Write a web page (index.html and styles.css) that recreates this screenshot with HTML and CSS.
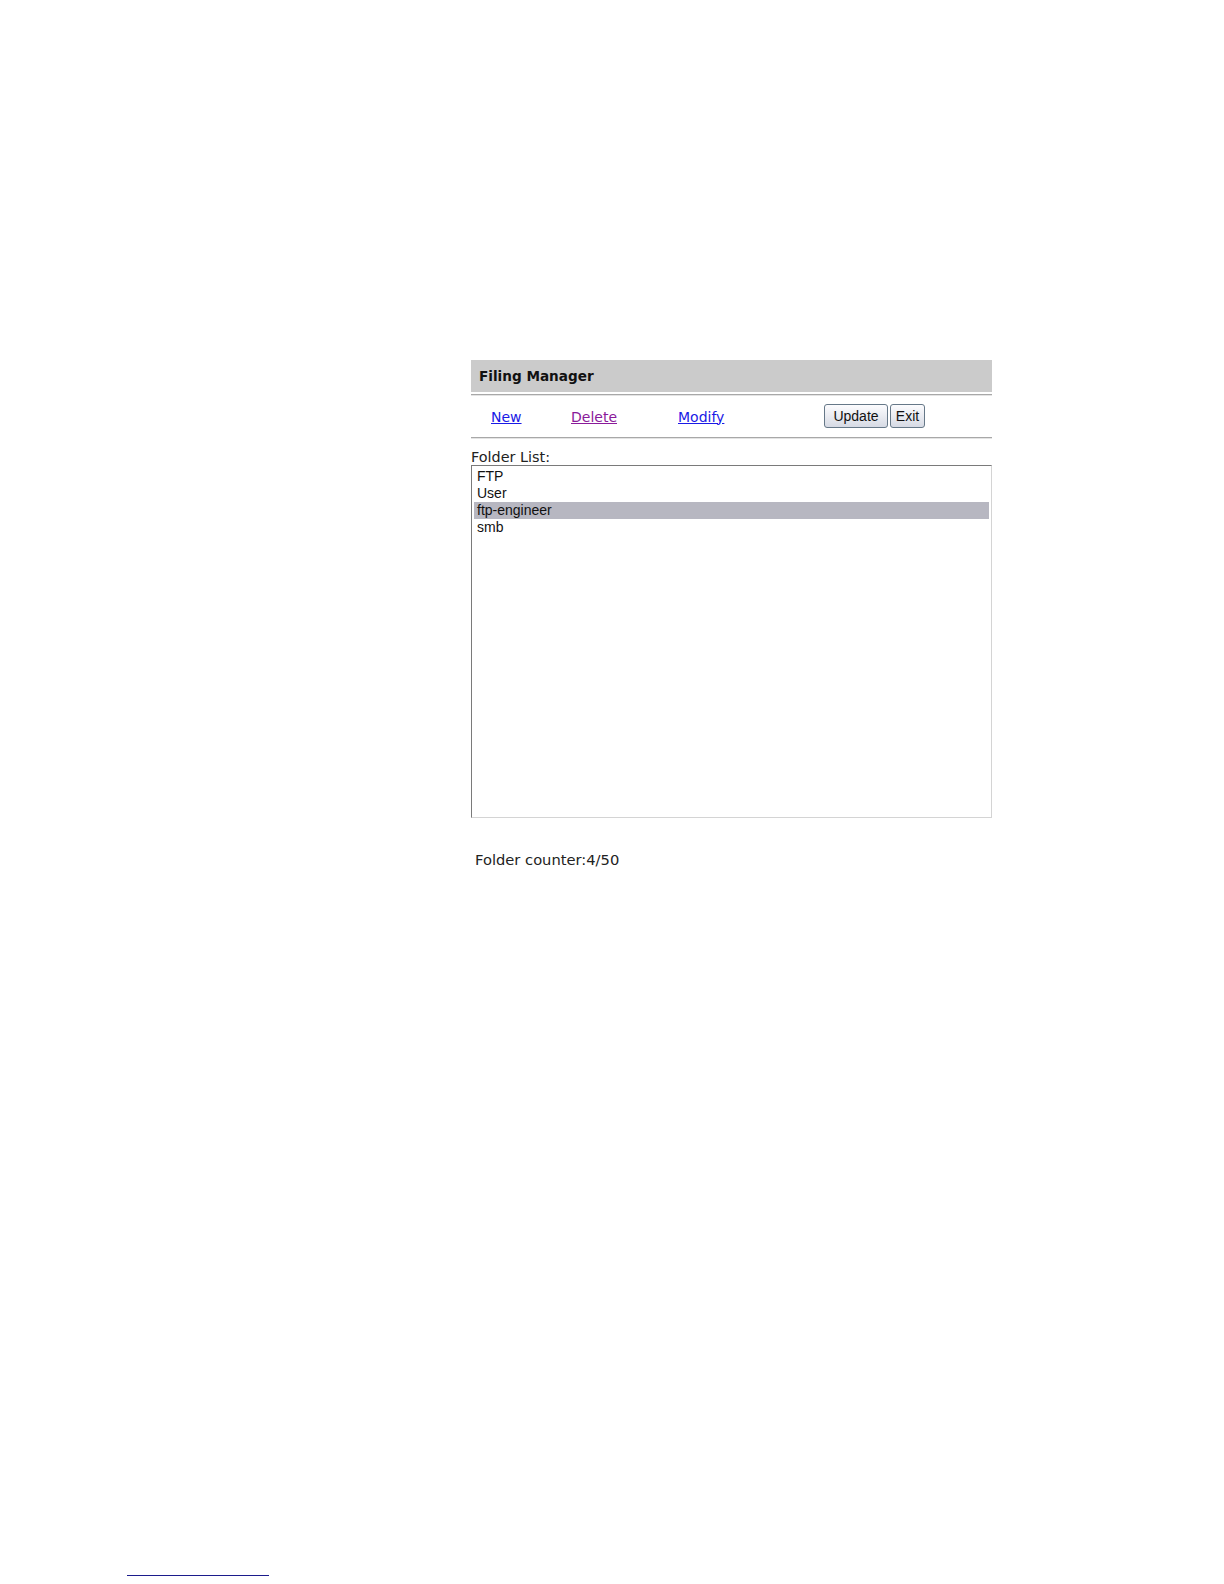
FILE: index.html
```html
<!DOCTYPE html>
<html>
<head>
<meta charset="utf-8">
<title>Filing Manager</title>
<link rel="stylesheet" href="styles.css">
</head>
<body>
<div class="page">
  <div class="panel">
    <div class="header">Filing Manager</div>
    <div class="rule"></div>
    <div class="toolbar">
      <a class="link new" href="#">New</a>
      <a class="link delete" href="#">Delete</a>
      <a class="link modify" href="#">Modify</a>
      <div class="buttons">
        <button class="btn update">Update</button>
        <button class="btn exit">Exit</button>
      </div>
    </div>
    <div class="rule"></div>
    <div class="label">Folder List:</div>
    <div class="listbox">
      <div class="item">FTP</div>
      <div class="item">User</div>
      <div class="item selected">ftp-engineer</div>
      <div class="item">smb</div>
    </div>
    <div class="counter">Folder counter:4/50</div>
  </div>
  <div class="footnote-rule"></div>
</div>
</body>
</html>
```

FILE: styles.css
```css
html, body {
  margin: 0;
  padding: 0;
  background: #ffffff;
}

.page {
  width: 1224px;
  height: 1584px;
  display: flex;
  flex-direction: column;
}

.panel {
  margin-top: 360px;
  margin-left: 471px;
  width: 521px;
  display: flex;
  flex-direction: column;
}

.header {
  height: 32px;
  line-height: 32px;
  background: #cbcbcb;
  padding-left: 8px;
  font-family: "DejaVu Sans", Verdana, sans-serif;
  font-weight: bold;
  font-size: 13.6px;
  color: #111111;
}

.rule {
  margin-top: 2px;
  border-top: 1px solid #a8a8a8;
  border-bottom: 1px solid #e4e4e4;
}

.toolbar {
  height: 39px;
  display: flex;
  align-items: center;
  padding-left: 20px;
}

.link {
  font-family: "DejaVu Sans", Verdana, sans-serif;
  font-size: 14px;
  text-decoration: underline;
  padding-top: 2px;
}

.new {
  width: 80px;
  color: #1a1ae6;
}

.delete {
  width: 107px;
  color: #8a1a9a;
}

.modify {
  width: 146px;
  color: #1a1ae6;
}

.buttons {
  display: flex;
  gap: 2px;
}

.btn {
  height: 24px;
  padding: 0 6px;
  font-family: "Liberation Sans", Arial, sans-serif;
  font-size: 14px;
  color: #111111;
  border: 1px solid #667888;
  border-radius: 3px;
  background: linear-gradient(#fcfcfe, #e8eaf0 55%, #d6dae4);
}

.update {
  width: 64px;
}

.exit {
  width: 35px;
  padding: 0 3px;
}

.label {
  margin-top: 10px;
  font-family: "DejaVu Sans", Verdana, sans-serif;
  font-size: 14.4px;
  color: #222222;
  line-height: 16px;
}

.listbox {
  height: 353px;
  box-sizing: border-box;
  border-top: 1px solid #7a7a7a;
  border-left: 1px solid #7a7a7a;
  border-right: 1px solid #d4d4d4;
  border-bottom: 1px solid #d4d4d4;
  padding: 2px 2px;
  display: flex;
  flex-direction: column;
}

.item {
  height: 17px;
  line-height: 17px;
  padding-left: 3px;
  font-family: "Liberation Sans", Arial, sans-serif;
  font-size: 14px;
  color: #111111;
}

.selected {
  background: #b7b7c1;
}

.counter {
  margin-top: 33px;
  padding-left: 4px;
  font-family: "DejaVu Sans", Verdana, sans-serif;
  font-size: 14.7px;
  color: #222222;
  line-height: 17px;
}

.footnote-rule {
  margin-top: auto;
  margin-bottom: 8px;
  margin-left: 127px;
  width: 142px;
  border-top: 1px solid #1c1c8c;
}
```
